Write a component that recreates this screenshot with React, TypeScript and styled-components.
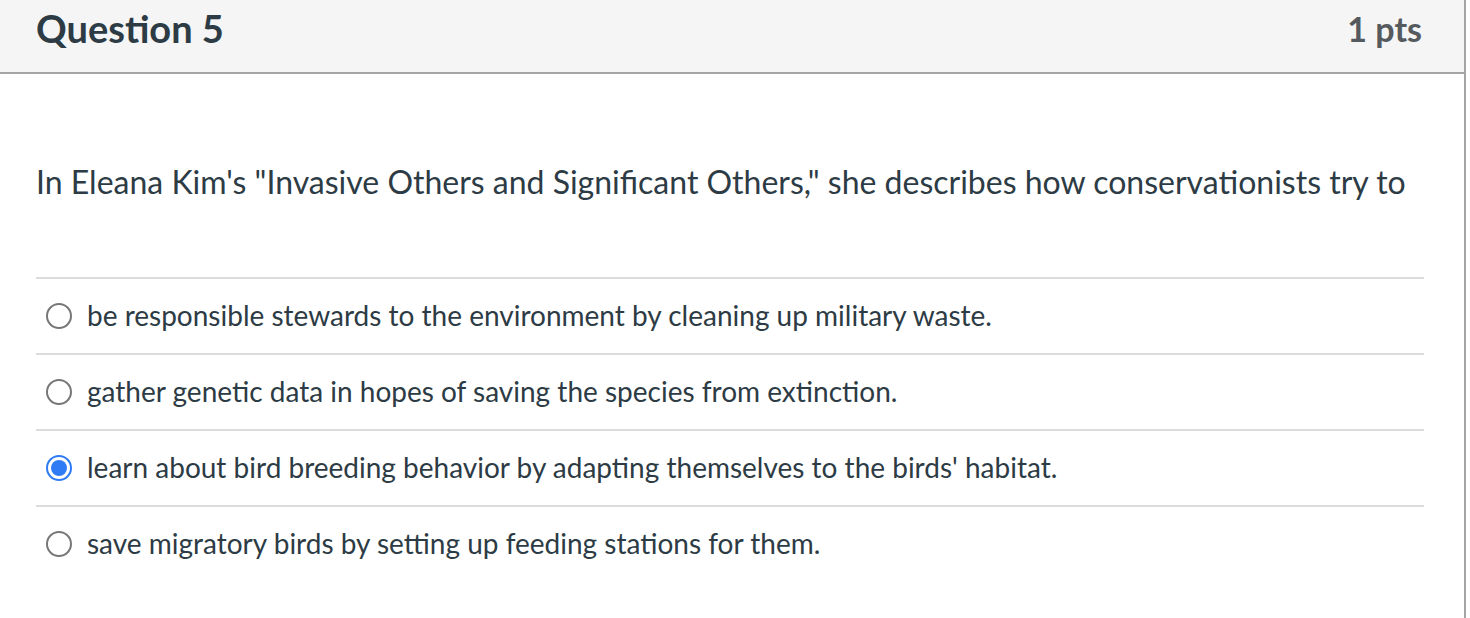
import React from "react";
import styled, { createGlobalStyle } from "styled-components";

const Global = createGlobalStyle`
  html, body { margin: 0; padding: 0; background: #ffffff; }
  body { font-family: Lato, "Open Sans", sans-serif; color: #2d3b45; overflow: hidden; }
`;

const Card = styled.div`
  box-sizing: border-box;
  width: 1468px;
  height: 640px;
  margin: -2px 0 0 -2px;
  border: 2px solid #a5a5a5;
  border-bottom: none;
  background: #fff;
`;

const Header = styled.div`
  box-sizing: border-box;
  height: 74px;
  display: flex;
  align-items: center;
  justify-content: space-between;
  padding: 0 42px 16px 36px;
  background: #f5f5f5;
  border-bottom: 2px solid #a5a5a5;
`;

const Title = styled.h2`
  margin: 0;
  font-size: 38px;
  line-height: 44px;
  font-weight: 700;
  color: #2d3b45;
`;

const Points = styled.div`
  font-size: 34px;
  line-height: 44px;
  font-weight: 700;
  color: #555a5e;
  padding-top: 2px;
`;

const Body = styled.div`
  padding: 88px 40px 0 36px;
`;

const Prompt = styled.p`
  margin: 0 0 75px 0;
  font-size: 32px;
  line-height: 40px;
  color: #2d3b45;
`;

const AnswerList = styled.div`
  display: flex;
  flex-direction: column;
`;

const Answer = styled.label`
  box-sizing: border-box;
  display: flex;
  align-items: center;
  gap: 15px;
  height: 76px;
  padding: 0 0 3px 10px;
  border-top: 2px solid #dcdcdc;
  font-size: 28px;
  color: #2d3b45;
`;

const Radio = styled.span<{ $checked?: boolean }>`
  box-sizing: border-box;
  width: 26px;
  height: 26px;
  margin-top: 3px;
  border-radius: 50%;
  flex: none;
  border: 2px solid ${(p) => (p.$checked ? "#2f7bf5" : "#777")};
  display: flex;
  align-items: center;
  justify-content: center;
  background: #fff;
  &::after {
    content: "";
    display: ${(p) => (p.$checked ? "block" : "none")};
    width: 16px;
    height: 16px;
    border-radius: 50%;
    background: #2f7bf5;
  }
`;

const answers = [
  { text: "be responsible stewards to the environment by cleaning up military waste.", checked: false },
  { text: "gather genetic data in hopes of saving the species from extinction.", checked: false },
  { text: "learn about bird breeding behavior by adapting themselves to the birds' habitat.", checked: true },
  { text: "save migratory birds by setting up feeding stations for them.", checked: false },
];

export default function App() {
  return (
    <>
      <Global />
      <Card>
        <Header>
          <Title>Question 5</Title>
          <Points>1 pts</Points>
        </Header>
        <Body>
          <Prompt>
            In Eleana Kim's "Invasive Others and Significant Others," she describes how conservationists try to
          </Prompt>
          <AnswerList>
            {answers.map((a) => (
              <Answer key={a.text}>
                <Radio $checked={a.checked} />
                {a.text}
              </Answer>
            ))}
          </AnswerList>
        </Body>
      </Card>
    </>
  );
}
